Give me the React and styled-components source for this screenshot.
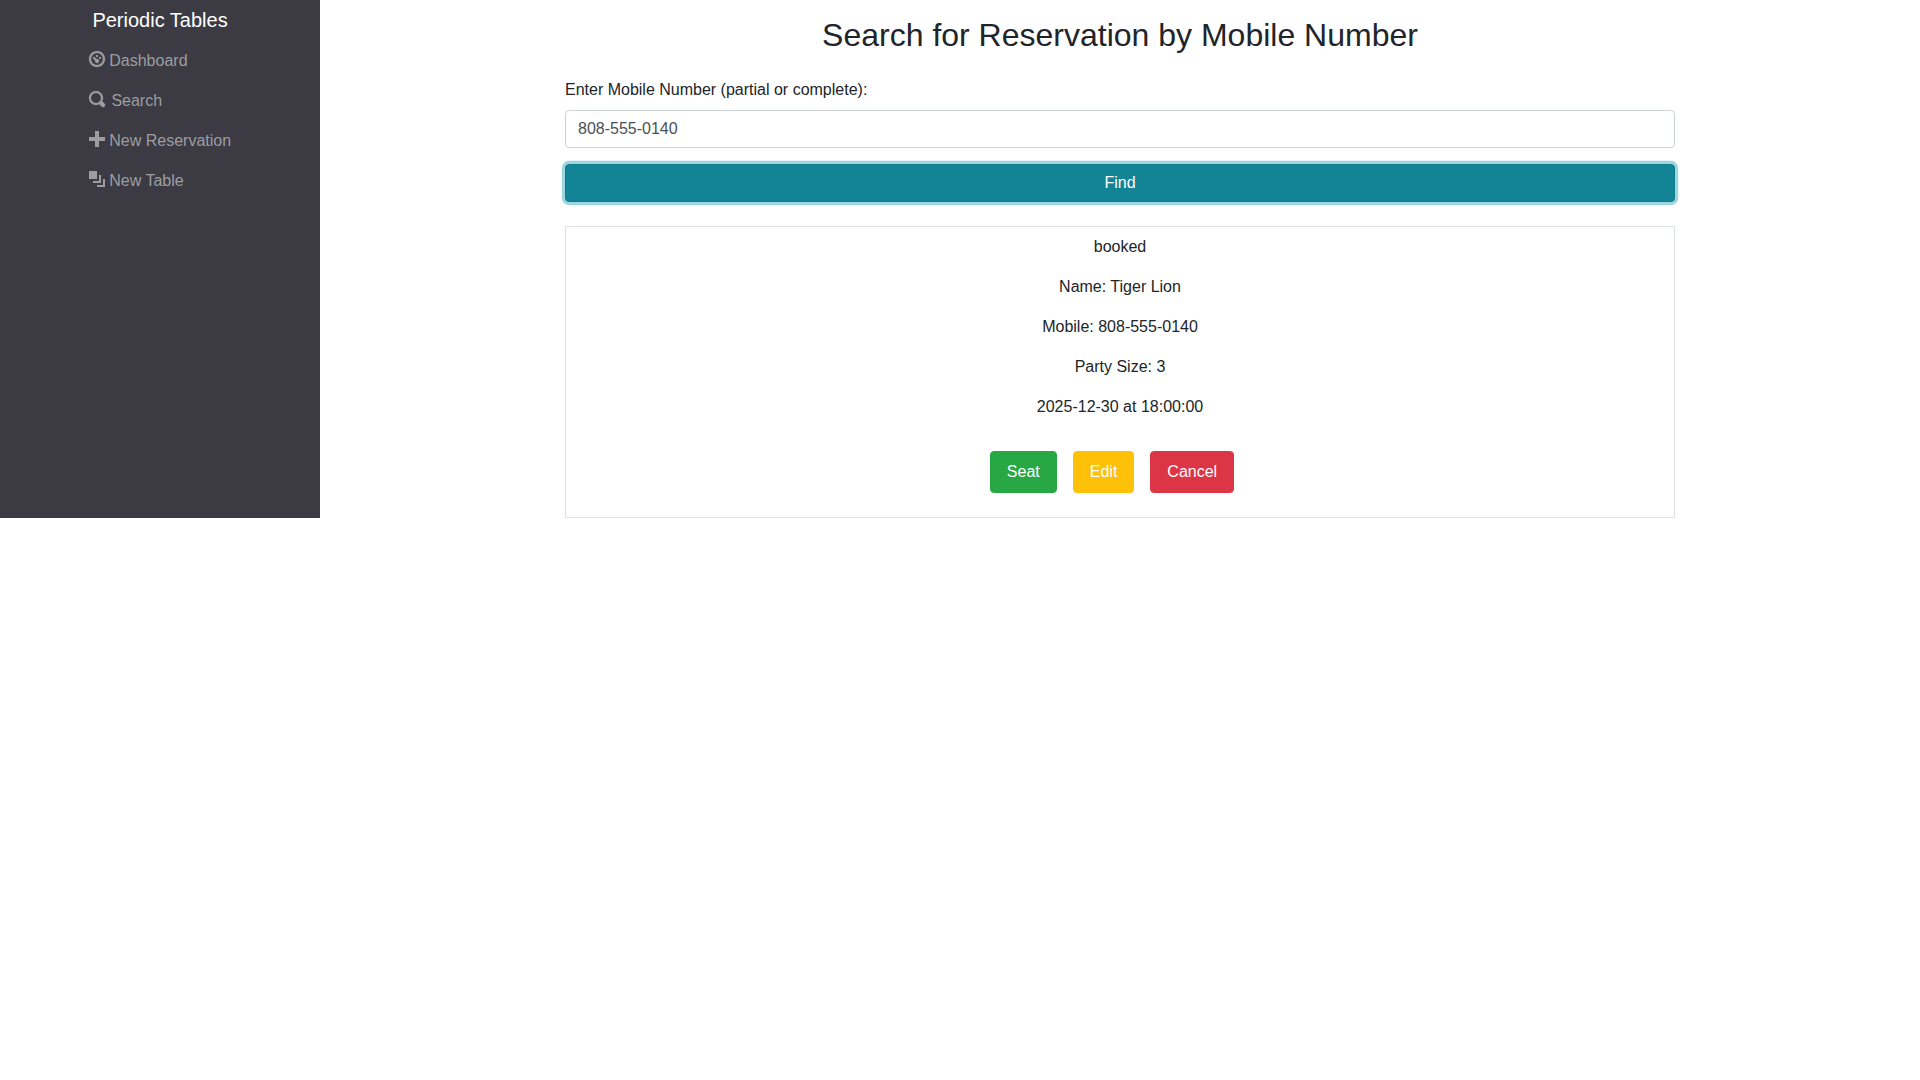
import React from "react";
import styled, { createGlobalStyle } from "styled-components";

const GlobalStyle = createGlobalStyle`
  *, *::before, *::after { box-sizing: border-box; }
  body {
    margin: 0;
    background: #fff;
    color: #212529;
    font: 400 16px/1.5 "Liberation Sans", Arial, sans-serif;
  }
`;

const Page = styled.div`
  display: flex;
  align-items: stretch;
`;

const Sidebar = styled.nav`
  flex: 0 0 320px;
  display: flex;
  flex-direction: column;
  align-items: flex-start;
  padding: 5px 0 0 89px;
  background: #3c3b44;
`;

const Brand = styled.div`
  height: 30px;
  padding-left: 3.4px;
  color: #fff;
  font-size: 20px;
  line-height: 30px;
`;

const NavList = styled.ul`
  list-style: none;
  margin: 6px 0 0;
  padding: 0;
`;

const NavItem = styled.li`
  height: 40px;
`;

const NavLink = styled.a`
  display: flex;
  align-items: center;
  gap: ${({ $gap }) => $gap || "4.25px"};
  height: 40px;
  color: #9d9da1;
  text-decoration: none;
`;

const Icon = styled.svg`
  flex: none;
  width: 16px;
  height: 16px;
  margin-top: -4px;
  overflow: visible;
  fill: currentColor;
  stroke: currentColor;
  stroke-width: ${({ $weight }) => $weight || 0};
`;

const Main = styled.main`
  flex: 1;
  display: flex;
  flex-direction: column;
  align-items: center;
`;

const Container = styled.div`
  width: 1110px;
`;

const Title = styled.h2`
  margin: 16px 0 24px;
  font-size: 32px;
  font-weight: 400;
  line-height: 38.4px;
  text-align: center;
`;

const Label = styled.label`
  display: block;
  margin-bottom: 8px;
`;

const Input = styled.input`
  display: block;
  width: 100%;
  height: 38px;
  padding: 6px 12px;
  border: 1px solid #ced4da;
  border-radius: 4px;
  color: #495057;
  background: #fff;
  font: inherit;
`;

const Button = styled.button`
  padding: ${({ $pad }) => $pad || "8px 16px"};
  border: 1px solid ${({ $border, $color }) => $border || $color};
  border-radius: 4px;
  background: ${({ $color }) => $color};
  color: #fff;
  font: inherit;
  text-align: center;
`;

const FindButton = styled(Button)`
  display: block;
  width: 100%;
  height: 38px;
  margin: 16px 0 24px;
  box-shadow: 0 0 0 3.2px rgba(58, 176, 195, 0.5);
`;

const Card = styled.section`
  padding: 8px 0 24px;
  border: 1px solid #dee2e6;
  text-align: center;
`;

const Line = styled.p`
  margin: 0 0 16px;
`;

const Actions = styled.div`
  display: flex;
  justify-content: center;
  gap: 16px;
  padding: 16px 16px 0 0;
`;

const LINKS = [
  {
    text: "Dashboard",
    weight: 0.16,
    path: "M4 0c-2.2 0-4 1.8-4 4s1.8 4 4 4 4-1.8 4-4-1.8-4-4-4zm0 1c1.66 0 3 1.34 3 3s-1.34 3-3 3-3-1.34-3-3 1.34-3 3-3zm0 1c-.28 0-.5.22-.5.5s.22.5.5.5.5-.22.5-.5-.22-.5-.5-.5zm-1.66 1a.5.5 0 0 0-.19.84l.91.91c-.02.08-.06.16-.06.25 0 .55.45 1 1 1s1-.45 1-1-.45-1-1-1c-.09 0-.17.04-.25.06l-.91-.91a.5.5 0 0 0-.44-.16.5.5 0 0 0-.06 0zm3.16 0c-.28 0-.5.22-.5.5s.22.5.5.5.5-.22.5-.5-.22-.5-.5-.5z",
  },
  {
    text: "Search",
    gap: "6.4px",
    weight: 0.12,
    path: "M3.5 0c-1.93 0-3.5 1.57-3.5 3.5s1.57 3.5 3.5 3.5c.59 0 1.17-.14 1.66-.41a1 1 0 0 0 .13.13l1 1a1.02 1.02 0 1 0 1.44-1.44l-1-1a1 1 0 0 0-.16-.13c.27-.49.44-1.06.44-1.66 0-1.93-1.55-3.5-3.5-3.5zm0 1c1.39 0 2.5 1.11 2.5 2.5 0 .66-.24 1.27-.66 1.72-.01.01-.02.02-.03.03a1 1 0 0 0-.13.13c-.44.4-1.04.63-1.69.63-1.39 0-2.5-1.11-2.5-2.5s1.11-2.5 2.5-2.5z",
  },
  { text: "New Reservation", path: "M3 0v3h-3v2h3v3h2v-3h3v-2h-3v-3h-2z" },
  {
    text: "New Table",
    path: "M0 0v4h4v-4h-4zm5 2v3h-3v1h4v-4h-1zm2 2v3h-3v1h4v-4h-1z",
  },
];

const DETAILS = [
  "booked",
  "Name: Tiger Lion",
  "Mobile: 808-555-0140",
  "Party Size: 3",
  "2025-12-30 at 18:00:00",
];

export default function App() {
  return (
    <>
      <GlobalStyle />
      <Page>
        <Sidebar>
          <Brand>Periodic Tables</Brand>
          <NavList>
            {LINKS.map(({ text, gap, weight, path }) => (
              <NavItem key={text}>
                <NavLink $gap={gap}>
                  <Icon viewBox="0 0 8 8" $weight={weight}>
                    <path d={path} />
                  </Icon>
                  <span>{text}</span>
                </NavLink>
              </NavItem>
            ))}
          </NavList>
        </Sidebar>
        <Main>
          <Container>
            <Title>Search for Reservation by Mobile Number</Title>
            <Label htmlFor="mobile">Enter Mobile Number (partial or complete):</Label>
            <Input id="mobile" defaultValue="808-555-0140" />
            <FindButton $color="#138496" $border="#117a8b" $pad="6px 12px">
              Find
            </FindButton>
            <Card>
              {DETAILS.map((line) => (
                <Line key={line}>{line}</Line>
              ))}
              <Actions>
                <Button $color="#28a745">Seat</Button>
                <Button $color="#ffc107">Edit</Button>
                <Button $color="#dc3545">Cancel</Button>
              </Actions>
            </Card>
          </Container>
        </Main>
      </Page>
    </>
  );
}
